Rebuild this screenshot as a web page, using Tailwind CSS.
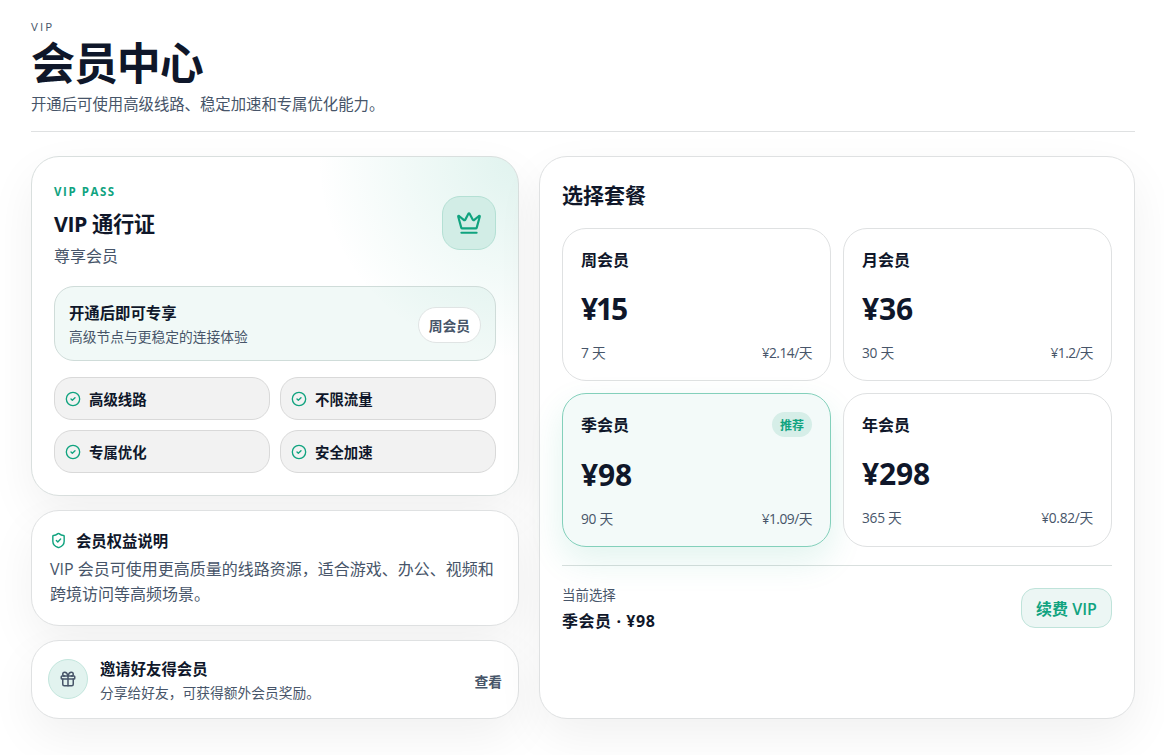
<!DOCTYPE html>
<html lang="zh-CN">
<head>
    <meta charset="UTF-8">
    <meta name="viewport" content="width=device-width, initial-scale=1.0">
    <title>会员中心</title>
    <script src="https://cdn.jsdelivr.net/npm/@tailwindcss/browser@4"></script>
</head>
<body class="bg-white text-[#0f172a] font-['Open_Sans','Noto_Sans_CJK_SC',sans-serif] h-[755px] overflow-hidden">
<main class="pl-[31px] pr-[29px] pt-[19px]">
    <header class="h-[113px] border-b border-[#dfe1e2]">
        <p class="text-[11.5px] leading-4 tracking-[0.18em] text-[#475569]">VIP</p>
        <h1 class="mt-1 text-[44px] leading-[48px] font-bold tracking-[-0.025em]">会员中心</h1>
        <p class="mt-[6px] text-[15.36px] leading-6 text-[#475569]">开通后可使用高级线路、稳定加速和专属优化能力。</p>
    </header>

    <div class="mt-6 flex gap-5 h-[563px]">
        <div class="w-[488px] flex flex-col gap-[14px]">
            <!-- VIP pass -->
            <section class="h-[340px] rounded-[28px] border border-[#d9dfde] p-[22px] bg-white bg-[radial-gradient(circle_at_top_right,rgba(16,163,127,0.13),transparent_34%)] shadow-[0_18px_48px_rgba(0,0,0,0.06)]">
                <div class="flex justify-between h-[107px]">
                    <div class="pt-[5px]">
                        <p class="text-[11.5px] leading-4 font-bold tracking-[0.135em] text-[#10a37f]">VIP PASS</p>
                        <h2 class="mt-[10px] text-[21.3px] leading-7 font-bold tracking-[-0.02em]">VIP 通行证</h2>
                        <p class="mt-[6px] text-base leading-6 text-[#475569]">尊享会员</p>
                    </div>
                    <div class="mt-[17px] size-[54px] rounded-[18px] border border-[#b4e0d4] bg-[#d2ede6] flex items-center justify-center text-[#10a37f]">
                        <svg class="size-[26px]" viewBox="0 0 24 24" fill="none" stroke="currentColor" stroke-width="2" stroke-linecap="round" stroke-linejoin="round"><path d="M11.562 3.266a.5.5 0 0 1 .876 0L15.39 8.87a1 1 0 0 0 1.516.294L21.183 5.5a.5.5 0 0 1 .798.519l-2.834 10.246a1 1 0 0 1-.956.734H5.81a1 1 0 0 1-.957-.734L2.02 6.02a.5.5 0 0 1 .798-.519l4.276 3.664a1 1 0 0 0 1.516-.294z"/><path d="M5 21h14"/></svg>
                    </div>
                </div>
                <div class="h-[75px] rounded-[20px] border border-[#cfdcd9] bg-[#0f9a7f]/6 px-[14px] flex items-center justify-between">
                    <div class="pt-[2px]">
                        <p class="text-[15.36px] leading-6 font-semibold">开通后即可专享</p>
                        <p class="text-[13.76px] leading-[22px] text-[#475569]">高级节点与更稳定的连接体验</p>
                    </div>
                    <span class="mt-[2px] h-9 w-[63px] text-center rounded-full border border-[#e0e4e4] bg-white text-[13.76px] leading-[35px] font-bold text-[#475569]">周会员</span>
                </div>
                <div class="mt-4 grid grid-cols-2 gap-[10px]">
                    <div class="h-[43px] rounded-[18px] border border-[#d9d9d9] bg-[#f2f2f2] px-[10px] flex items-center gap-2 text-[14.4px] font-semibold">
                        <svg class="size-4 text-[#10a37f]" viewBox="0 0 24 24" fill="none" stroke="currentColor" stroke-width="2" stroke-linecap="round" stroke-linejoin="round"><circle cx="12" cy="12" r="10"/><path d="m9 12 2 2 4-4"/></svg>
                        <span class="pt-[2px]">高级线路</span>
                    </div>
                    <div class="h-[43px] rounded-[18px] border border-[#d9d9d9] bg-[#f2f2f2] px-[10px] flex items-center gap-2 text-[14.4px] font-semibold">
                        <svg class="size-4 text-[#10a37f]" viewBox="0 0 24 24" fill="none" stroke="currentColor" stroke-width="2" stroke-linecap="round" stroke-linejoin="round"><circle cx="12" cy="12" r="10"/><path d="m9 12 2 2 4-4"/></svg>
                        <span class="pt-[2px]">不限流量</span>
                    </div>
                    <div class="h-[43px] rounded-[18px] border border-[#d9d9d9] bg-[#f2f2f2] px-[10px] flex items-center gap-2 text-[14.4px] font-semibold">
                        <svg class="size-4 text-[#10a37f]" viewBox="0 0 24 24" fill="none" stroke="currentColor" stroke-width="2" stroke-linecap="round" stroke-linejoin="round"><circle cx="12" cy="12" r="10"/><path d="m9 12 2 2 4-4"/></svg>
                        <span class="pt-[2px]">专属优化</span>
                    </div>
                    <div class="h-[43px] rounded-[18px] border border-[#d9d9d9] bg-[#f2f2f2] px-[10px] flex items-center gap-2 text-[14.4px] font-semibold">
                        <svg class="size-4 text-[#10a37f]" viewBox="0 0 24 24" fill="none" stroke="currentColor" stroke-width="2" stroke-linecap="round" stroke-linejoin="round"><circle cx="12" cy="12" r="10"/><path d="m9 12 2 2 4-4"/></svg>
                        <span class="pt-[2px]">安全加速</span>
                    </div>
                </div>
            </section>

            <!-- Benefits -->
            <section class="h-[116px] rounded-[28px] border border-[#dfe1e2] bg-white px-[18px] pt-[17px] shadow-[0_18px_48px_rgba(0,0,0,0.06)]">
                <div class="flex items-center gap-[9px] h-6">
                    <svg class="size-[17px] text-[#10a37f]" viewBox="0 0 24 24" fill="none" stroke="currentColor" stroke-width="2" stroke-linecap="round" stroke-linejoin="round"><path d="M20 13c0 5-3.5 7.5-7.66 8.95a1 1 0 0 1-.67-.01C7.5 20.5 4 18 4 13V6a1 1 0 0 1 1-1c2 0 4.5-1.2 6.24-2.72a1.17 1.17 0 0 1 1.52 0C14.51 3.81 17 5 19 5a1 1 0 0 1 1 1z"/><path d="m9 12 2 2 4-4"/></svg>
                    <h3 class="pt-[4px] text-[15.36px] leading-6 font-semibold">会员权益说明</h3>
                </div>
                <p class="mt-[5px] text-base leading-[25px] text-[#475569]">VIP 会员可使用更高质量的线路资源，适合游戏、办公、视频和跨境访问等高频场景。</p>
            </section>

            <!-- Invite -->
            <section class="h-[79px] rounded-[28px] border border-[#dfe1e2] bg-white px-4 flex items-center gap-3 shadow-[0_18px_48px_rgba(0,0,0,0.06)]">
                <div class="mb-[2px] size-10 rounded-full border border-[#c3e6dd] bg-[#e2f3ef] flex items-center justify-center text-[#475569]">
                    <svg class="size-[18px]" viewBox="0 0 24 24" fill="none" stroke="currentColor" stroke-width="2" stroke-linecap="round" stroke-linejoin="round"><rect x="3" y="8" width="18" height="4" rx="1"/><path d="M12 8v13"/><path d="M19 12v7a2 2 0 0 1-2 2H7a2 2 0 0 1-2-2v-7"/><path d="M7.5 8a2.5 2.5 0 0 1 0-5A4.8 8 0 0 1 12 8a4.8 8 0 0 1 4.5-5 2.5 2.5 0 0 1 0 5"/></svg>
                </div>
                <div class="flex-1 pt-[2px]">
                    <p class="text-[15.36px] leading-6 font-semibold">邀请好友得会员</p>
                    <p class="text-[13.76px] leading-[22px] text-[#475569]">分享给好友，可获得额外会员奖励。</p>
                </div>
                <span class="text-[13.76px] font-bold text-[#475569] mt-[5px]">查看</span>
            </section>
        </div>

        <!-- Plans -->
        <section class="flex-1 rounded-[28px] border border-[#dfe1e2] bg-white px-[22px] pt-[22px] shadow-[0_18px_48px_rgba(0,0,0,0.06)]">
            <h2 class="h-[49px] text-[21px] leading-[33px] font-bold">选择套餐</h2>
            <div class="grid grid-cols-2 grid-rows-[153px_154px] gap-3">
                <div class="rounded-[24px] border border-[#dfe1e2] bg-white px-[18px] pt-[19px]">
                    <p class="text-base leading-[25px] font-semibold">周会员</p>
                    <p class="mt-[15px] text-[30px] leading-[42px] font-bold tracking-[-0.07em]">¥15</p>
                    <p class="mt-[13px] flex justify-between text-[13.76px] leading-5 text-[#475569]"><span class="tracking-[-0.02em]">7 天</span><span class="tracking-[-0.5px]">¥2.14/天</span></p>
                </div>
                <div class="rounded-[24px] border border-[#dfe1e2] bg-white px-[18px] pt-[19px]">
                    <p class="text-base leading-[25px] font-semibold">月会员</p>
                    <p class="mt-[15px] text-[30px] leading-[42px] font-bold tracking-[-0.005em]">¥36</p>
                    <p class="mt-[13px] flex justify-between text-[13.76px] leading-5 text-[#475569]"><span class="tracking-[-0.02em]">30 天</span><span class="tracking-[-0.6px]">¥1.2/天</span></p>
                </div>
                <div class="rounded-[24px] border border-[#83d0bb] bg-[#f3faf9] px-[18px] pt-[18px] shadow-[0_14px_34px_rgba(16,163,127,0.12)]">
                    <p class="flex justify-between text-base leading-[26px] font-semibold">季会员<span class="h-[25px] px-2 rounded-full bg-[#d6eee8] text-xs leading-[27px] font-bold text-[#10a37f]">推荐</span></p>
                    <p class="mt-4 text-[30px] leading-[42px] font-bold tracking-[-0.005em]">¥98</p>
                    <p class="mt-[13px] flex justify-between text-[13.76px] leading-5 text-[#475569]"><span class="tracking-[-0.02em]">90 天</span><span class="tracking-[-0.5px]">¥1.09/天</span></p>
                </div>
                <div class="rounded-[24px] border border-[#dfe1e2] bg-white px-[18px] pt-[19px]">
                    <p class="text-base leading-[25px] font-semibold">年会员</p>
                    <p class="mt-[15px] text-[30px] leading-[42px] font-bold tracking-[-0.005em]">¥298</p>
                    <p class="mt-[13px] flex justify-between text-[13.76px] leading-5 text-[#475569]"><span class="tracking-[-0.02em]">365 天</span><span class="tracking-[-0.3px]">¥0.82/天</span></p>
                </div>
            </div>
            <div class="mt-[18px] pt-[18px] border-t border-[#d9dfde] flex items-center justify-between">
                <div>
                    <p class="text-[13.44px] leading-[22px] text-[#475569]">当前选择</p>
                    <p class="mt-[2px] text-base leading-[26px] font-bold tracking-[0.035em]">季会员 · ¥98</p>
                </div>
                <button class="mb-[3px] h-10 w-[91px] rounded-[14px] border border-[#bfe3da] bg-[#ecf6f4] pt-[2px] text-base font-semibold text-[#10a37f]">续费 VIP</button>
            </div>
        </section>
    </div>
</main>
</body>
</html>
